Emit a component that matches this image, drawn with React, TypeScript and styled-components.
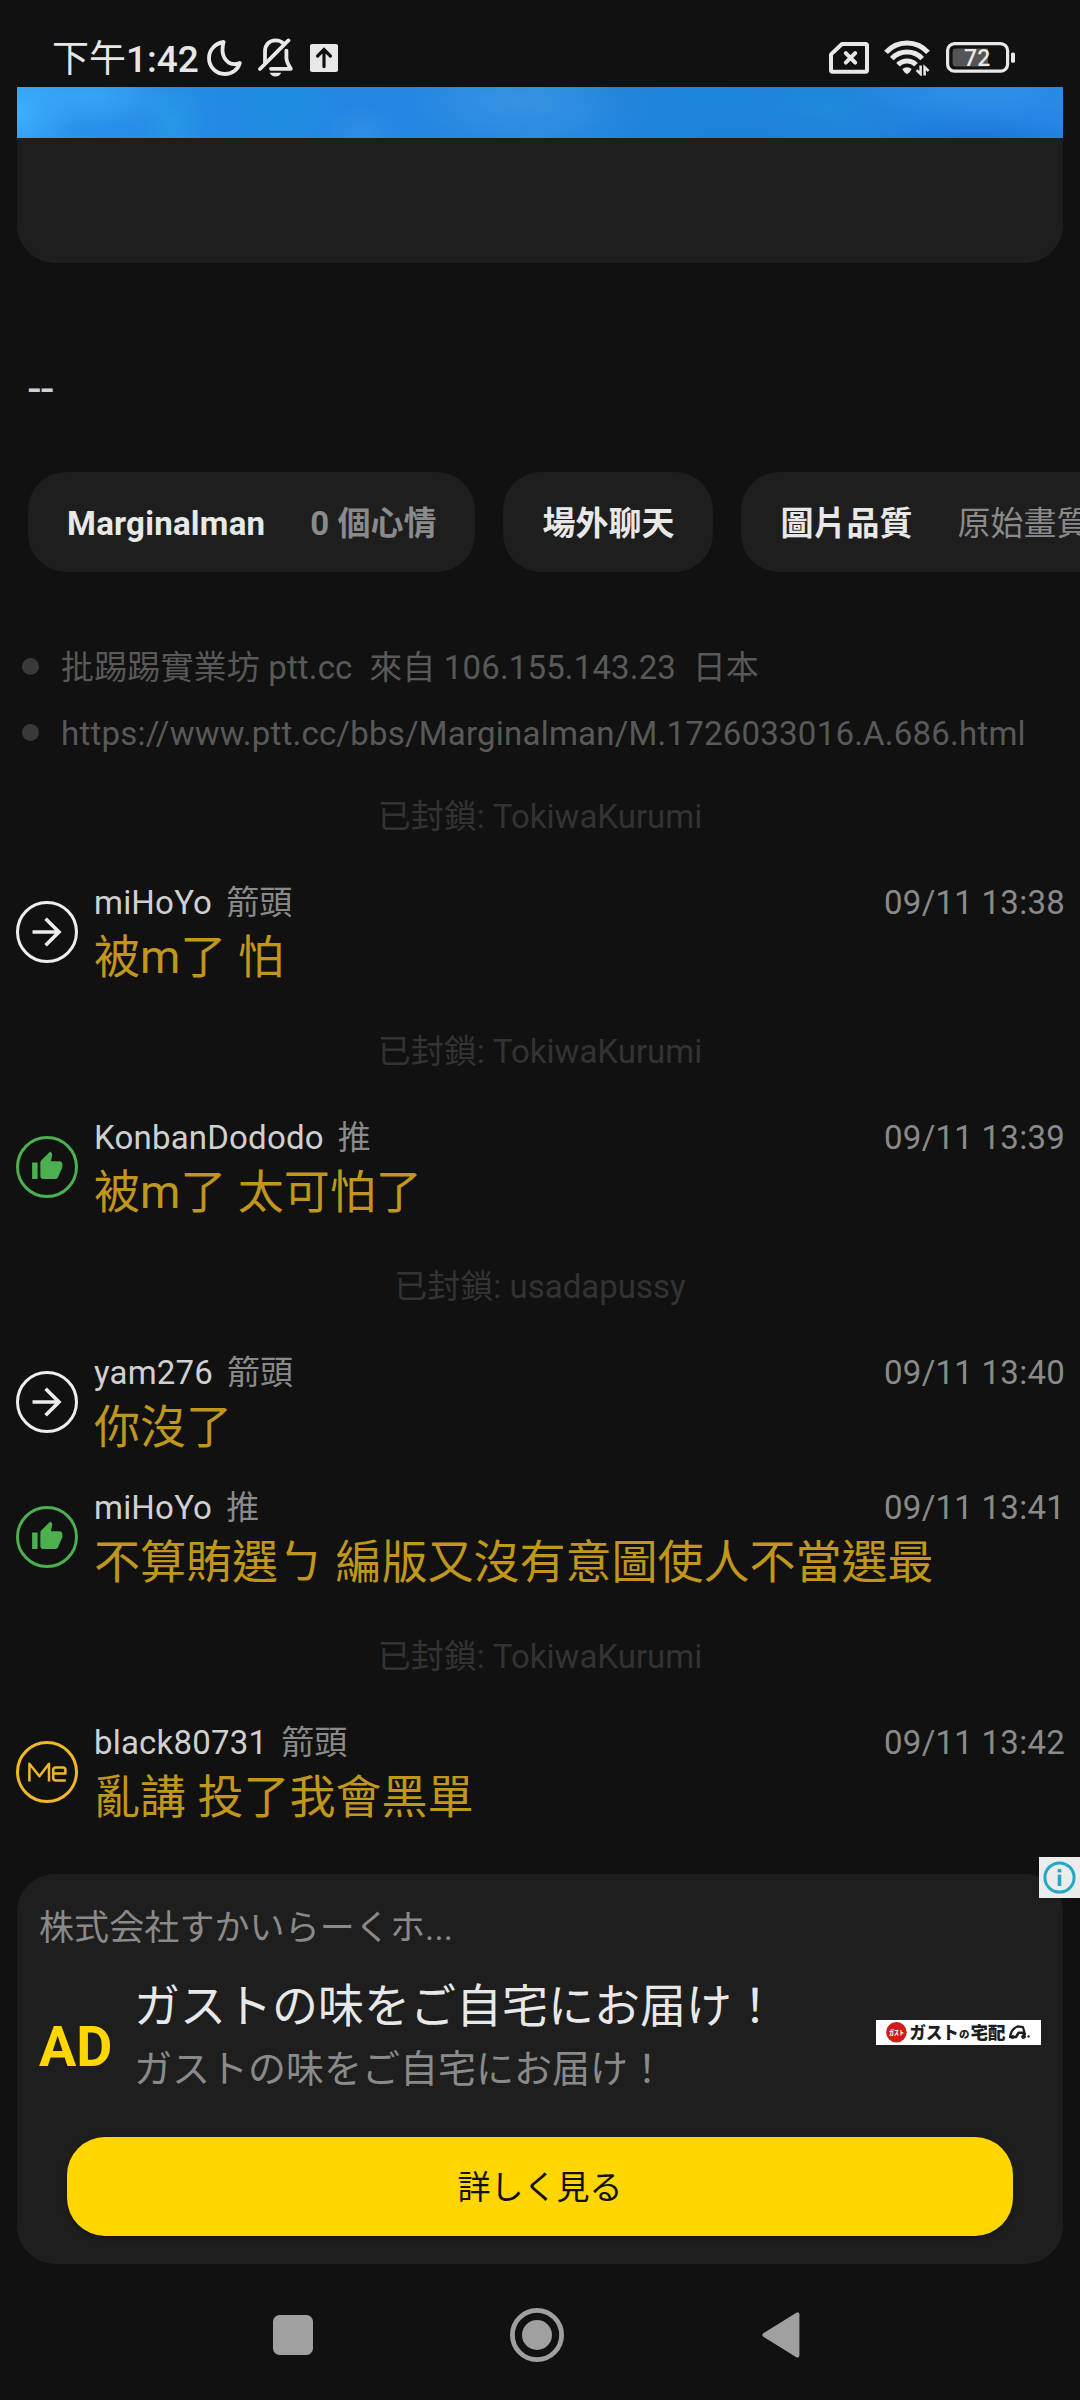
import React from "react";
import styled, { createGlobalStyle } from "styled-components";

const GlobalStyle = createGlobalStyle`
  * { box-sizing: border-box; }
  html, body { margin: 0; padding: 0; background: #111111; }
  body { font-family: Roboto, "Noto Sans CJK TC", sans-serif; color: #e6e6e6; }
  svg { display: block; flex: none; }
`;

const Screen = styled.div`
  width: 1080px;
  height: 2400px;
  display: flex;
  flex-direction: column;
  overflow: hidden;
  background: #111111;
`;

const StatusBar = styled.header`
  flex: none;
  height: 87px;
  padding: 28px 64px 0 52px;
  display: flex;
  align-items: center;
  justify-content: space-between;
`;

const StatusGroup = styled.div<{ $gap: number }>`
  display: flex;
  align-items: center;
  gap: ${(p) => p.$gap}px;
`;

const Clock = styled.span`
  font-size: 37px;
  line-height: 50px;
  font-weight: 500;
  white-space: nowrap;
  width: 139px;
  padding-top: 5px;
`;

const ClockPrefix = styled.span`
  font-weight: 400;
`;

const PostCard = styled.section`
  flex: none;
  height: 176px;
  margin: 0 17px;
  border-radius: 0 0 38px 38px;
  background: #1e1e1e;
  overflow: hidden;
`;

const PostImage = styled.div`
  height: 51px;
  background:
    radial-gradient(ellipse 60px 60px at 0% 50%, #3eaefcff 0%, #3eaefc00 100%),
    radial-gradient(ellipse 90px 34px at 70px 8px, #37a5f6ff 0%, #37a5f600 100%),
    radial-gradient(ellipse 34px 44px at 155px 34px, #2799e4ff 0%, #2799e400 100%),
    radial-gradient(ellipse 60px 40px at 265px 20px, #1c8edeff 0%, #1c8ede00 100%),
    radial-gradient(ellipse 40px 26px at 345px 44px, #3590e6b0 0%, #3590e600 100%),
    radial-gradient(ellipse 110px 40px at 500px 14px, #3792e2ff 0%, #3792e200 100%),
    radial-gradient(ellipse 60px 18px at 595px 8px, #2483d2c0 0%, #2483d200 100%),
    radial-gradient(ellipse 130px 30px at 720px 50px, #1a82d4c0 0%, #1a82d400 100%),
    radial-gradient(ellipse 60px 28px at 810px 20px, #1f8dd8c0 0%, #1f8dd800 100%),
    radial-gradient(ellipse 120px 22px at 960px 52px, #1c75daff 0%, #1c75da00 100%),
    radial-gradient(ellipse 130px 26px at 960px 6px, #2f8fe8ff 0%, #2f8fe800 100%),
    linear-gradient(90deg, #2a94ec 0%, #2389e4 20%, #2386e2 38%, #2a8be0 50%, #1d84dc 62%, #1f84dc 80%, #2886e6 100%);
`;

const Signature = styled.p`
  flex: none;
  margin: 0;
  height: 209px;
  padding: 98px 28px 0;
  font-size: 46px;
  line-height: 54px;
  color: #d0d0d0;
`;

const Chips = styled.div`
  flex: none;
  display: flex;
  gap: 28px;
  padding-left: 28px;
`;

const Chip = styled.div`
  flex: none;
  height: 100px;
  padding: 3px 39px 0 39px;
  border-radius: 38px;
  background: #1e1e1e;
  display: flex;
  align-items: center;
  gap: 45px;
  font-size: 33px;
  line-height: 40px;
  white-space: nowrap;
`;

const ChipTitle = styled.span<{ $latin?: boolean }>`
  font-weight: 700;
  color: #e8e8e8;
  letter-spacing: ${(p) => (p.$latin ? "0.25px" : "0")};
`;

const ChipValue = styled.span<{ $strong?: boolean }>`
  font-weight: ${(p) => (p.$strong ? 700 : 400)};
  color: #8a8a8a;
`;

const Notes = styled.ul`
  flex: none;
  list-style: none;
  margin: 0;
  padding: 61px 0 0 22px;
  height: 194px;
`;

const Note = styled.li<{ $tracking: number }>`
  height: 66px;
  display: flex;
  align-items: center;
  gap: 22px;
  font-size: 33px;
  line-height: 64px;
  letter-spacing: ${(p) => p.$tracking}px;
  white-space: pre;
  color: #595959;

  &::before {
    content: "";
    width: 17px;
    height: 17px;
    border-radius: 50%;
    background: #393939;
  }
`;

const NoteText = styled.span`
  padding-top: 3px;
`;

const Thread = styled.main`
  flex: none;
  height: 1108px;
`;

const Blocked = styled.div`
  height: 100px;
  line-height: 102px;
  text-align: center;
  font-size: 33px;
  color: #333333;
`;

const CommentRow = styled.article`
  height: 135px;
  padding: 0 15px 0 16px;
  display: flex;
  gap: 16px;
`;

const Avatar = styled.div<{ $color: string }>`
  flex: none;
  margin-top: 35px;
  width: 62px;
  height: 62px;
  border: 3px solid ${(p) => p.$color};
  border-radius: 50%;
  color: ${(p) => p.$color};
  display: flex;
  align-items: center;
  justify-content: center;
`;

const CommentText = styled.div`
  flex: 1;
  padding-top: 17px;
`;

const CommentMeta = styled.div`
  display: flex;
  height: 40px;
  font-size: 33px;
  line-height: 40px;
  color: #8a8a8a;
`;

const Author = styled.span`
  color: #d0d0d0;
  margin-right: 14px;
  letter-spacing: 0.2px;
`;

const Time = styled.time`
  margin-left: auto;
  letter-spacing: 0.25px;
`;

const CommentBody = styled.p`
  margin: 0;
  height: 66px;
  font-size: 46px;
  line-height: 68px;
  white-space: nowrap;
  color: #c0961c;
`;

const AdCard = styled.aside`
  flex: none;
  position: relative;
  height: 390px;
  margin: 0 17px;
  padding: 30px 22px 28px;
  border-radius: 38px;
  background: #1e1e1e;
  display: flex;
  flex-direction: column;
  font-family: Roboto, "Noto Sans CJK JP", sans-serif;
`;

const AdChoices = styled.div`
  position: absolute;
  top: -17px;
  right: -17px;
  width: 41px;
  height: 41px;
  background: #ececec;
  display: flex;
  align-items: center;
  justify-content: center;
`;

const Advertiser = styled.div`
  height: 46px;
  padding-top: 1px;
  font-size: 35px;
  line-height: 48px;
  letter-spacing: 0.1px;
  color: #8a8a8a;
`;

const AdBody = styled.div`
  height: 187px;
  display: flex;
`;

const AdLabel = styled.div`
  width: 96px;
  padding-top: 66px;
  font-size: 55.5px;
  line-height: 64px;
  font-weight: 700;
  color: #ffd600;
`;

const AdCopy = styled.div`
  flex: 1;
  padding-top: 23px;
`;

const AdTitle = styled.div`
  height: 66px;
  margin-left: -1px;
  font-size: 46px;
  line-height: 66px;
  color: #e8e8e8;
`;

const AdSubtitle = styled.div`
  height: 60px;
  margin-left: -1px;
  font-size: 38px;
  line-height: 60px;
  color: #8a8a8a;
`;

const AdLogo = styled.div`
  margin-top: 70px;
  width: 165px;
  height: 25px;
  background: #ffffff;
`;

const AdButton = styled.button`
  height: 99px;
  margin: 0 28px;
  padding: 0;
  border: 0;
  border-radius: 38px;
  background: #ffd600;
  color: #111111;
  font-family: inherit;
  font-size: 33px;
  line-height: 101px;
  box-shadow: 0 2px 4px rgba(0, 0, 0, 0.35);
`;

const NavBar = styled.nav`
  flex: none;
  height: 136px;
  padding: 44px 280px 0 273px;
  display: flex;
  align-items: flex-start;
  justify-content: space-between;
`;

const ink = "#e8e8e8";

const MoonIcon = () => (
  <svg width="35" height="36" viewBox="0 0 35 36">
    <path
      d="M16.6 2 C8.2 3.3 2 10 2 18 C2 27 9 34 17.8 34 C25 34 31 29.6 32.8 23 C22.5 27.2 12.2 18.5 16.6 2 Z"
      fill="none"
      stroke={ink}
      strokeWidth="3.8"
      strokeLinejoin="round"
    />
  </svg>
);

const MutedBellIcon = () => (
  <svg width="36" height="39" viewBox="0 0 36 39" fill="none" stroke={ink} strokeWidth="3.8">
    <path d="M7 25 V13.5 C7 6.8 11.3 2.4 17.6 2.4 C20.7 2.4 23.4 3.4 25.4 5.4" />
    <path d="M28.4 12.6 V20 C28.4 24 30.4 27 32.8 30.8 H13" strokeLinecap="round" strokeLinejoin="round" />
    <path d="M2 31 L30.4 2.4" strokeLinecap="round" />
    <path d="M11.8 34.8 H23.2 C22.4 37.2 20.2 38.4 17.5 38.4 C14.8 38.4 12.6 37.2 11.8 34.8 Z" fill={ink} stroke="none" />
  </svg>
);

const UploadBoxIcon = () => (
  <svg width="28" height="28" viewBox="0 0 28 28">
    <rect width="28" height="28" rx="2" fill={ink} />
    <path d="M14 22.6 V6.5 M7.6 12 L14 5.6 L20.4 12" fill="none" stroke="#111" strokeWidth="3.2" strokeLinecap="round" />
  </svg>
);

const NoSimIcon = () => (
  <svg width="40" height="32" viewBox="0 0 40 32" fill="none" stroke={ink}>
    <path d="M13 2 H36.5 Q38 2 38 3.5 V28 Q38 29.8 36.5 29.8 H3.5 Q2 29.8 2 28 V12.4 Z" strokeWidth="4" strokeLinejoin="round" />
    <path d="M16.8 11.2 L26.2 20.6 M26.2 11.2 L16.8 20.6" strokeWidth="4" strokeLinecap="round" />
  </svg>
);

const WifiIcon = () => (
  <svg width="47" height="36" viewBox="0 0 47 36" fill="none" stroke={ink} strokeWidth="5">
    <path d="M2 12.4 A28 28 0 0 1 44 12.4" />
    <path d="M7.8 18.6 A21 21 0 0 1 38.2 18.6" />
    <path d="M14 24.8 A12.4 12.4 0 0 1 32 24.8" />
    <path d="M18.4 29 A6.6 6.6 0 0 1 27.6 29 Q26.4 32.4 23 34.2 Q19.6 32.4 18.4 29 Z" fill={ink} stroke="none" />
    <path d="M36.6 25.6 V34 L32.6 30.2 M40.6 35.6 V27.2 L44.6 31" strokeWidth="2.5" />
  </svg>
);

const BatteryIcon = () => (
  <svg width="70" height="32" viewBox="0 0 70 32">
    <rect x="1.6" y="1.6" width="60" height="27.6" rx="7" fill="none" stroke={ink} strokeWidth="3.2" />
    <path d="M10 6.4 H42 V24.4 H10 Q6.6 24.4 6.6 21 V9.8 Q6.6 6.4 10 6.4 Z" fill="#555555" />
    <rect x="65" y="10.4" width="4" height="10.4" rx="1.6" fill={ink} />
    <text x="31.2" y="24.2" textAnchor="middle" fontFamily="Roboto, sans-serif" fontWeight="500" fontSize="23" fill={ink}>
      72
    </text>
  </svg>
);

const ArrowIcon = () => (
  <svg width="30" height="30" viewBox="0 0 30 30" fill="none" stroke="currentColor" strokeWidth="3.6">
    <path d="M0.5 15 H27 M13.6 1.8 L27 15 L13.6 28.2" />
  </svg>
);

const ThumbIcon = () => (
  <svg width="33" height="33" viewBox="0.2 0.6 24 24" fill="currentColor">
    <path d="M1 21h4V9H1v12zm22-11c0-1.1-.9-2-2-2h-6.31l.95-4.57.03-.32c0-.41-.17-.79-.44-1.06L14.17 1 7.59 7.59C7.22 7.95 7 8.45 7 9v10c0 1.1.9 2 2 2h9c.83 0 1.54-.5 1.84-1.22l3.02-7.05c.09-.23.14-.47.14-.73v-2z" />
  </svg>
);

const MeIcon = () => (
  <svg width="39" height="20" viewBox="0 0 39 20" fill="none" stroke="currentColor" strokeWidth="2.5" strokeLinejoin="round">
    <path d="M1.4 19.4 V1.8 L11.4 14.2 L21 1.8 V19.4" />
    <path d="M25.4 11.4 H37.4 V7.8 Q37.4 5.4 35 5.4 H27.8 Q25.2 5.4 25.2 8 V15.8 Q25.2 18.4 27.8 18.4 H37.8" />
  </svg>
);

const InfoIcon = () => (
  <svg width="33" height="33" viewBox="0 0 33 33">
    <circle cx="16.5" cy="16.5" r="14.6" fill="none" stroke="#20a8c6" strokeWidth="3" />
    <rect x="14.7" y="8" width="3.6" height="3.4" fill="#20a8c6" />
    <rect x="14.7" y="13.6" width="3.6" height="11.4" fill="#20a8c6" />
  </svg>
);

const GustoLogo = () => (
  <svg width="165" height="25" viewBox="0 0 165 25" fontFamily='"Noto Sans CJK JP", sans-serif' fontWeight="900">
    <circle cx="20.4" cy="12.2" r="10.3" fill="#d01c1a" />
    <text x="20.4" y="15.4" fontSize="6.5" textAnchor="middle" fill="#ffffff" textLength="15" lengthAdjust="spacingAndGlyphs">ガスト</text>
    <text x="33.6" y="18.8" fontSize="17.5" fill="#221c1c" textLength="49" lengthAdjust="spacingAndGlyphs">ガスト</text>
    <text x="83" y="17.6" fontSize="10.5" fill="#221c1c">の</text>
    <text x="94.6" y="18.8" fontSize="17.5" fill="#221c1c">宅配</text>
    <g fill="none" stroke="#221c1c" strokeLinecap="round" strokeLinejoin="round">
      <path d="M134 17 Q135 9 142 6.4 L147 7.2 L149 14.4" strokeWidth="2.2" />
      <path d="M134.5 17 H140 L142.6 12.8 H147.4 L148.4 16.6" strokeWidth="2.6" />
      <circle cx="136.6" cy="17" r="1.6" fill="#221c1c" strokeWidth="1" />
      <circle cx="147.4" cy="16.8" r="1.8" fill="#221c1c" strokeWidth="1" />
    </g>
    <circle cx="152.6" cy="16.4" r="1.2" fill="#221c1c" />
  </svg>
);

const RecentsIcon = () => (
  <svg width="40" height="54" viewBox="0 0 40 54">
    <rect y="7" width="40" height="40" rx="6.5" fill="#a0a0a0" />
  </svg>
);

const HomeIcon = () => (
  <svg width="55" height="54" viewBox="0 0 55 54">
    <circle cx="27" cy="27" r="24.6" fill="none" stroke="#a0a0a0" strokeWidth="4.8" />
    <circle cx="27" cy="27" r="15" fill="#a0a0a0" />
  </svg>
);

const BackIcon = () => (
  <svg width="38" height="54" viewBox="0 0 38 54">
    <path d="M2.4 27 L35.4 6.4 V47.6 Z" fill="#a0a0a0" stroke="#a0a0a0" strokeWidth="4" strokeLinejoin="round" />
  </svg>
);

type Kind = "arrow" | "push" | "me";

const kinds: Record<Kind, { color: string; icon: React.ReactNode }> = {
  arrow: { color: "#eeeeee", icon: <ArrowIcon /> },
  push: { color: "#4caf50", icon: <ThumbIcon /> },
  me: { color: "#f0b829", icon: <MeIcon /> },
};

type Item =
  | { blocked: string }
  | { kind: Kind; author: string; role: string; time: string; body: string };

const items: Item[] = [
  { blocked: "TokiwaKurumi" },
  { kind: "arrow", author: "miHoYo", role: "箭頭", time: "09/11 13:38", body: "被m了 怕" },
  { blocked: "TokiwaKurumi" },
  { kind: "push", author: "KonbanDododo", role: "推", time: "09/11 13:39", body: "被m了 太可怕了" },
  { blocked: "usadapussy" },
  { kind: "arrow", author: "yam276", role: "箭頭", time: "09/11 13:40", body: "你沒了" },
  { kind: "push", author: "miHoYo", role: "推", time: "09/11 13:41", body: "不算賄選ㄅ 編版又沒有意圖使人不當選最" },
  { blocked: "TokiwaKurumi" },
  { kind: "me", author: "black80731", role: "箭頭", time: "09/11 13:42", body: "亂講 投了我會黑單" },
];

export default function App() {
  return (
    <Screen>
      <GlobalStyle />
      <StatusBar>
        <StatusGroup $gap={16}>
          <Clock>
            <ClockPrefix>下午</ClockPrefix>1:42
          </Clock>
          <MoonIcon />
          <MutedBellIcon />
          <UploadBoxIcon />
        </StatusGroup>
        <StatusGroup $gap={15}>
          <NoSimIcon />
          <WifiIcon />
          <BatteryIcon />
        </StatusGroup>
      </StatusBar>
      <PostCard>
        <PostImage />
      </PostCard>
      <Signature>--</Signature>
      <Chips>
        <Chip>
          <ChipTitle $latin>Marginalman</ChipTitle>
          <ChipValue $strong>0 個心情</ChipValue>
        </Chip>
        <Chip>
          <ChipTitle>場外聊天</ChipTitle>
        </Chip>
        <Chip>
          <ChipTitle>圖片品質</ChipTitle>
          <ChipValue>原始畫質</ChipValue>
        </Chip>
      </Chips>
      <Notes>
        <Note $tracking={0.15}>
          <NoteText>{"批踢踢實業坊 ptt.cc  來自 106.155.143.23  日本"}</NoteText>
        </Note>
        <Note $tracking={0.22}>
          <NoteText>https://www.ptt.cc/bbs/Marginalman/M.1726033016.A.686.html</NoteText>
        </Note>
      </Notes>
      <Thread>
        {items.map((item, i) =>
          "blocked" in item ? (
            <Blocked key={i}>已封鎖: {item.blocked}</Blocked>
          ) : (
            <CommentRow key={i}>
              <Avatar $color={kinds[item.kind].color}>{kinds[item.kind].icon}</Avatar>
              <CommentText>
                <CommentMeta>
                  <Author>{item.author}</Author>
                  <span>{item.role}</span>
                  <Time>{item.time}</Time>
                </CommentMeta>
                <CommentBody>{item.body}</CommentBody>
              </CommentText>
            </CommentRow>
          )
        )}
      </Thread>
      <AdCard>
        <AdChoices>
          <InfoIcon />
        </AdChoices>
        <Advertiser>株式会社すかいらーくホ...</Advertiser>
        <AdBody>
          <AdLabel>AD</AdLabel>
          <AdCopy>
            <AdTitle>ガストの味をご自宅にお届け！</AdTitle>
            <AdSubtitle>ガストの味をご自宅にお届け！</AdSubtitle>
          </AdCopy>
          <AdLogo>
            <GustoLogo />
          </AdLogo>
        </AdBody>
        <AdButton>詳しく見る</AdButton>
      </AdCard>
      <NavBar>
        <RecentsIcon />
        <HomeIcon />
        <BackIcon />
      </NavBar>
    </Screen>
  );
}
